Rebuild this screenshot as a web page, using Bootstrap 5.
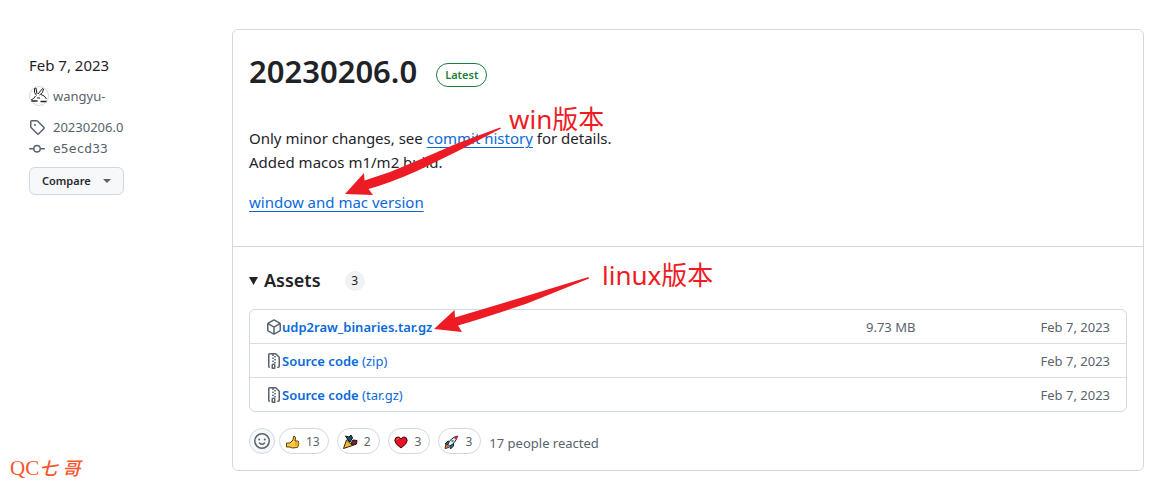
<!DOCTYPE html>
<html lang="en">
<head>
<meta charset="utf-8">
<meta name="viewport" content="width=device-width, initial-scale=1">
<title>Release 20230206.0</title>
<link href="https://cdn.jsdelivr.net/npm/bootstrap@5.3.0/dist/css/bootstrap.min.css" rel="stylesheet">
<style>
body{font-family:"Noto Sans","Noto Sans CJK SC",sans-serif;font-size:15px;line-height:24px;color:#1f2328;background:#fff}
svg{display:block;flex:none}
.oct{width:16px;height:16px;fill:#59636e}
.release-page{padding:29px 26px 8px 10px}
.release-side{width:222px;flex:none}
.side-info{padding:24px 0 0 19px}
.meta{color:#59636e;font-size:13px;line-height:22px;gap:8px}
.meta a{color:inherit;text-decoration:none}
.meta-tag{margin-top:9px}
.avatar-pic{width:20px;height:20px;margin-right:-4px}
.mono{font-family:"DejaVu Sans Mono",monospace}
.btn-compare{--bs-btn-padding-x:12px;--bs-btn-padding-y:3px;--bs-btn-font-size:11px;--bs-btn-font-weight:600;--bs-btn-line-height:20px;--bs-btn-bg:#f6f8fa;--bs-btn-color:#25292e;--bs-btn-border-color:#d1d9e0;--bs-btn-border-radius:6px;gap:12px;margin-top:7px}
.btn-compare::after{margin:0;color:#59636e;border-width:4px 4px 0}
.release-box{border:1px solid #d1d9e0;border-radius:6px;margin-bottom:12px}
.release-main{padding:20px 16px 32px;border-bottom:1px solid #d1d9e0}
.release-main h1{font-size:31px;line-height:42px;font-weight:600;margin:0}
.latest{border:1px solid #1a7f37;color:#1a7f37;border-radius:24px;font-size:11px;font-weight:600;line-height:22px;padding:0 8px;margin:8px 0 0 19px}
.notes{padding-top:34px}
.notes p{margin:0 0 16px}
.notes a{color:#0969da;text-underline-offset:3px}
.assets{padding:20px 16px 16px}
.assets summary{list-style:none;display:flex;align-items:center;line-height:26px;margin-bottom:16px}
.assets summary::-webkit-details-marker{display:none}
.assets h2{font-size:18px;line-height:26px;font-weight:600;margin:0 24px 0 6px}
.counter{background:#eff1f3;border-radius:20px;font-size:12px;line-height:20px;width:20px;text-align:center;margin-top:2px}
.asset-box{border:1px solid #d1d9e0;border-radius:6px;color:#59636e;font-size:13px;line-height:20px}
.asset-box table{width:100%}
.asset-box td{padding:7px 16px 6px;white-space:nowrap}
.asset-box tr+tr td{border-top:1px solid #d8dee4}
.asset-box a{color:#0969da;text-decoration:none}
.asset-box strong{font-weight:600}
.asset-box .size-cell{width:82px}
.asset-box .date-cell{width:194px;text-align:right}
.reactions{margin-top:16px;gap:8px;color:#59636e;font-size:13px;line-height:22px}
.react{border:1px solid #d1d9e0;background:#fff;border-radius:26px;height:26px;color:#59636e;font-size:12px;line-height:24px;padding:2px 8px 0 4px;gap:6px}
.react svg{width:16px;height:16px}
.react-add{padding:0;width:26px;background:#f6f8fa;justify-content:center;margin-right:-4px}
.react-total{padding-top:3px}
.brand-mark{color:#f9552d;font-family:"Liberation Serif","Noto Sans CJK SC",serif;font-size:21px;line-height:28px}
.brand-mark i{font-size:18px;font-weight:500}
.note{position:absolute;color:#ed1c24;font-size:26px;line-height:32px;white-space:nowrap}
.arrow{position:absolute;fill:#ed1c24;pointer-events:none}
.note-win{left:276px;top:73px}.arrow-win{left:112px;top:97px}
.note-linux{left:369px;top:229px}.arrow-linux{left:201px;top:246px}
</style>
</head>
<body>
<div class="release-page d-flex">
  <aside class="release-side d-flex flex-column">
    <div class="side-info">
      <div>Feb 7, 2023</div>
      <div class="meta d-flex align-items-center mt-2">
        <svg class="avatar-pic" viewBox="0 0 20 20"><circle cx="10" cy="10" r="9.5" fill="#fff" stroke="#d1d9e0"/><g fill="none" stroke="#222" stroke-width="1"><path d="M2 14q3-1 4.500-4M5.500 2.500 7 2l1 6M5.500 2.500v4l2 3M9 8l4.500-5.500 1 .5-1 3.500-3 2.500M12 8.500q4 1 5.500 4.500M8 12h3"/><path d="M2.500 15h6M11.500 15.500h6" stroke-width="1.500"/></g></svg>
        <a href="#">wangyu-</a></div>
      <div class="meta meta-tag d-flex align-items-center"><svg class="oct" viewBox="0 0 16 16"><path d="M1 7.775V2.750C1 1.784 1.784 1 2.750 1h5.025c.464 0 .910.184 1.238.513l6.250 6.250a1.750 1.750 0 0 1 0 2.474l-5.026 5.026a1.750 1.750 0 0 1-2.474 0l-6.250-6.250A1.752 1.752 0 0 1 1 7.775Zm1.500 0c0 .066.026.130.073.177l6.250 6.250a.25.25 0 0 0 .354 0l5.025-5.025a.25.25 0 0 0 0-.354l-6.250-6.250a.25.25 0 0 0-.177-.073H2.750a.25.25 0 0 0-.25.25ZM6 5a1 1 0 1 1 0 2 1 1 0 0 1 0-2Z"/></svg><a href="#">20230206.0</a></div>
      <div class="meta d-flex align-items-center"><svg class="oct" viewBox="0 0 16 16"><path d="M11.930 8.500a4.002 4.002 0 0 1-7.860 0H.75a.75.75 0 0 1 0-1.500h3.320a4.002 4.002 0 0 1 7.860 0h3.320a.75.75 0 0 1 0 1.500Zm-1.430-.75a2.500 2.500 0 1 0-5 0 2.500 2.500 0 0 0 5 0Z"/></svg><a href="#" class="mono">e5ecd33</a></div>
      <button type="button" class="btn btn-compare dropdown-toggle d-inline-flex align-items-center">Compare</button>
    </div>
    <div class="brand-mark mt-auto">QC<i>七</i> <i>哥</i></div>
  </aside>
  <main class="release-box position-relative flex-grow-1">
    <section class="release-main">
      <div class="d-flex align-items-center"><h1>20230206.0</h1><span class="latest">Latest</span></div>
      <div class="notes">
        <p>Only minor changes, see <a href="#">commit history</a> for details.<br>Added macos m1/m2 build.</p>
        <p class="mb-0"><a href="#">window and mac version</a></p>
      </div>
    </section>
    <section class="assets">
      <details open>
        <summary><svg width="9" height="9" viewBox="0 0 9 9"><path d="M0 1h9L4.500 9z" fill="#1f2328"/></svg><h2>Assets</h2><span class="counter">3</span></summary>
        <div class="asset-box"><table>
          <tr><td><div class="d-flex align-items-center"><svg class="oct" viewBox="0 0 16 16"><path d="m8.878.392 5.250 3.045c.54.314.872.89.872 1.514v6.098a1.750 1.750 0 0 1-.872 1.514l-5.250 3.045a1.750 1.750 0 0 1-1.756 0l-5.250-3.045A1.750 1.750 0 0 1 1 11.049V4.951c0-.624.332-1.201.872-1.514L7.122.392a1.750 1.750 0 0 1 1.756 0ZM7.875 1.690l-4.630 2.685L8 7.133l4.755-2.758-4.630-2.685a.248.248 0 0 0-.25 0ZM2.500 5.677v5.372c0 .09.047.171.125.216l4.625 2.683V8.432Zm6.250 8.271 4.625-2.683a.25.25 0 0 0 .125-.216V5.677L8.750 8.432Z"/></svg><a href="#"><strong>udp2raw_binaries.tar.gz</strong></a></div></td><td class="size-cell">9.73 MB</td><td class="date-cell">Feb 7, 2023</td></tr>
          <tr><td><div class="d-flex align-items-center"><svg class="oct" viewBox="0 0 16 16"><path id="zip" d="M3.500 1.750v11.500c0 .09.048.173.126.217a.75.75 0 0 1-.752 1.298A1.748 1.748 0 0 1 2 13.250V1.750C2 .784 2.784 0 3.750 0h5.586c.464 0 .909.185 1.237.513l2.914 2.914c.329.328.513.773.513 1.237v8.586A1.750 1.750 0 0 1 12.250 15h-.5a.75.75 0 0 1 0-1.500h.5a.25.25 0 0 0 .25-.25V4.664a.25.25 0 0 0-.073-.177L9.513 1.573a.25.25 0 0 0-.177-.073H7.250a.75.75 0 0 1 0 1.500h-.5a.75.75 0 0 1 0-1.500h-3a.25.25 0 0 0-.25.25Zm3.750 8.750h.5c.966 0 1.750.784 1.750 1.750v3a.75.75 0 0 1-.75.75h-2.500a.75.75 0 0 1-.75-.75v-3c0-.966.784-1.750 1.750-1.750ZM6 5.250a.75.75 0 0 1 .75-.75h.5a.75.75 0 0 1 0 1.500h-.5A.75.75 0 0 1 6 5.250Zm.75 2.250h.5a.75.75 0 0 1 0 1.500h-.5a.75.75 0 0 1 0-1.500ZM8 6.750A.75.75 0 0 1 8.750 6h.5a.75.75 0 0 1 0 1.500h-.5A.75.75 0 0 1 8 6.750ZM8.750 3h.5a.75.75 0 0 1 0 1.500h-.5a.75.75 0 0 1 0-1.500ZM8 9.750A.75.75 0 0 1 8.750 9h.5a.75.75 0 0 1 0 1.500h-.5A.75.75 0 0 1 8 9.750Zm-1 2.500v2.250h1v-2.250a.25.25 0 0 0-.25-.25h-.5a.25.25 0 0 0-.25.25Z"/></svg><a href="#"><strong>Source code</strong> (zip)</a></div></td><td></td><td class="date-cell">Feb 7, 2023</td></tr>
          <tr><td><div class="d-flex align-items-center"><svg class="oct" viewBox="0 0 16 16"><use href="#zip"/></svg><a href="#"><strong>Source code</strong> (tar.gz)</a></div></td><td></td><td class="date-cell">Feb 7, 2023</td></tr>
        </table></div>
      </details>
      <div class="reactions d-flex align-items-center">
        <button type="button" class="react react-add d-flex align-items-center" aria-label="Add reaction"><svg viewBox="0 0 16 16" fill="none" stroke="#59636e" stroke-width="1.500" stroke-linecap="round"><circle cx="8" cy="8" r="7.250"/><path d="M5.500 10q2.500 2.500 5 0"/><circle cx="5.200" cy="6.500" r="1" fill="#59636e" stroke="none"/><circle cx="10.800" cy="6.500" r="1" fill="#59636e" stroke="none"/></svg></button>
        <button type="button" class="react d-flex align-items-center"><svg viewBox="0 0 16 16"><path d="M2.500 9H6l3-3 .5-3.500q2-.5 2 1.500l-.5 3h3q1.200.3.5 1.500.8 1 0 1.800.5 1-.5 1.700.2 1-.8 1.500l-5 .5L6 13H2.500z" fill="#ffc83d" stroke="#5a4012" stroke-width="1"/><path d="M11 9h3M11 11h3" stroke="#d67d00" stroke-width=".7"/></svg>13</button>
        <button type="button" class="react d-flex align-items-center"><svg viewBox="0 0 16 16"><path d="m6 6-2.500-4L7 3l2-2 1.500 3L8 8z" fill="#16506b" stroke="#111"/><path d="m9 9 2-3 4 .5-.5 3.500-4 1.500z" fill="#7a1d2b" stroke="#111"/><path d="M1.500 14.500 4.500 6l6 5.500z" fill="#fcb636" stroke="#2d2414" stroke-width="1"/></svg>2</button>
        <button type="button" class="react d-flex align-items-center"><svg viewBox="0 0 16 16"><path d="M8 14Q2 10 1.800 6.500 2 3 5 3q2 0 3 2 1-2 3-2 3 0 3.200 3.500Q14 10 8 14z" fill="#e81224" stroke="#3a0b10" stroke-width="1"/><path d="M4 6q0-1.500 1.500-1.500" fill="none" stroke="#ff8b92"/></svg>3</button>
        <button type="button" class="react d-flex align-items-center"><svg viewBox="0 0 16 16"><path d="m2 14.500 1-4 3 3z" fill="#f59222" stroke="#5a2b0b"/><path d="m5 7-3 3 3 .5 2 2 .5 2.500 3-3V9z" fill="#27718b" stroke="#222"/><path d="M5 10.500Q7 4 14.500 2q-2 7.500-8 10z" fill="#e9edf0" stroke="#222" stroke-width="1"/><path d="m10.500 3.500 4-1.500-1 4z" fill="#d91e36"/><circle cx="9.500" cy="7" r="1.300" fill="#359ec5"/></svg>3</button>
        <span class="react-total">17 people reacted</span>
      </div>
    </section>
    <span class="note note-win">win版本</span>
    <svg class="arrow arrow-win" width="157" height="70" viewBox="345 127 157 70"><path d="M345 194 364 173 364.500 180.500 390 172 420 159.500 457 143.500 500 127.500 501 128.500 457 151.500 417 171Q390 183 368.500 189L373 195z"/></svg>
    <span class="note note-linux">linux版本</span>
    <svg class="arrow arrow-linux" width="156" height="57" viewBox="434 276 156 57"><path d="M434 329 454.500 310 455 317.500 515 299.500 588.500 277 589 278.500 527 303.500Q490 316 458 325.500L462 332z"/></svg>
  </main>
</div>
<script src="https://cdn.jsdelivr.net/npm/bootstrap@5.3.0/dist/js/bootstrap.bundle.min.js"></script>
</body>
</html>
